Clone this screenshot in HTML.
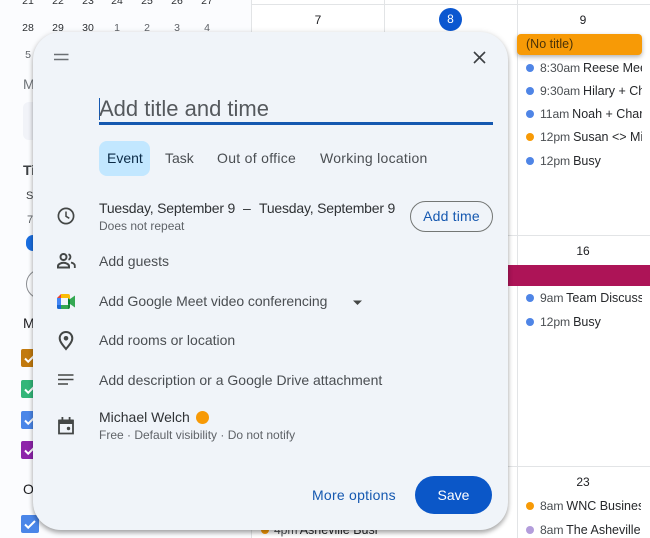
<!DOCTYPE html>
<html><head><meta charset="utf-8">
<style>
html,body{margin:0;padding:0;background:#fff}
#p{position:relative;width:650px;height:538px;overflow:hidden;background:#fff;font-family:"Liberation Sans",sans-serif;color:#3c4043;filter:blur(.3px)}
.t{position:absolute;white-space:nowrap;line-height:18px}
.g{font-size:14px;color:#4a4e52;top:0}
.s{font-size:12px;color:#5f6368}
.c{font-size:10.5px;color:#2c2f32;width:20px;text-align:center;font-weight:400}
.l{position:absolute;background:#e2e4e6}
.ev{font-size:12.5px;color:#26282b;position:absolute;white-space:nowrap;overflow:hidden;line-height:16px}
.ev i{font-style:normal;color:#4a4e52;font-size:12.2px;letter-spacing:-.1px;margin-right:-.5px}
.d{position:absolute;width:8px;height:8px;border-radius:50%;background:#4f85e6}
.cb{position:absolute;left:21px;width:18px;height:18px;border-radius:2px}
.cb svg{position:absolute;left:0;top:0}
.ic{position:absolute}
</style></head><body><div id="p">
<div style="position:absolute;left:0;top:0;width:251px;height:538px;background:#fbfcfe"></div>
<div class="l" style="left:251px;top:0;width:1px;height:538px"></div>
<div class="l" style="left:517px;top:0;width:1px;height:538px"></div>
<div class="l" style="left:384px;top:0;width:1px;height:34px"></div>
<div class="l" style="left:251px;top:4px;width:399px;height:1px"></div>
<div class="l" style="left:508px;top:235px;width:142px;height:1px"></div>
<div class="l" style="left:508px;top:466px;width:142px;height:1px"></div>

<div class="t c" style="left:18px;top:-8px">21</div><div class="t c" style="left:48px;top:-8px">22</div><div class="t c" style="left:78px;top:-8px">23</div><div class="t c" style="left:107px;top:-8px">24</div><div class="t c" style="left:137px;top:-8px">25</div><div class="t c" style="left:167px;top:-8px">26</div><div class="t c" style="left:197px;top:-8px">27</div>
<div class="t c" style="left:18px;top:19px">28</div><div class="t c" style="left:48px;top:19px">29</div><div class="t c" style="left:78px;top:19px">30</div><div class="t c" style="left:107px;top:19px;color:#5f6368">1</div><div class="t c" style="left:137px;top:19px;color:#5f6368">2</div><div class="t c" style="left:167px;top:19px;color:#5f6368">3</div><div class="t c" style="left:197px;top:19px;color:#5f6368">4</div>
<div class="t c" style="left:18px;top:46px;color:#5f6368">5</div>
<div class="t" style="left:23px;top:75px;font-size:14px;color:#70757a">M</div>
<div style="position:absolute;left:23px;top:102px;width:20px;height:38px;background:#f1f3f8;border-radius:6px"></div>
<div class="t" style="left:23px;top:161px;font-size:14px;font-weight:bold;color:#3c4043">Ti</div>
<div class="t" style="left:26px;top:187px;font-size:11px;color:#3c4043">S</div>
<div class="t" style="left:27px;top:211px;font-size:11px;color:#5f6368">7.</div>
<div style="position:absolute;left:26px;top:235px;width:14px;height:16px;border-radius:8px;background:#1a6ee0"></div>
<div style="position:absolute;left:26px;top:269px;width:30px;height:30px;border-radius:50%;border:1px solid #8a8d91;box-sizing:border-box"></div>
<div class="t" style="left:23px;top:314px;font-size:14px;color:#202124">M</div>
<div class="cb" style="top:349px;background:#c27a0e"><svg width="18" height="18"><path d="M4 9.500l3.200 3.200L14 6" fill="none" stroke="#fff" stroke-width="2"/></svg></div>
<div class="cb" style="top:380px;background:#33b679"><svg width="18" height="18"><path d="M4 9.500l3.200 3.200L14 6" fill="none" stroke="#fff" stroke-width="2"/></svg></div>
<div class="cb" style="top:411px;background:#4a86e8"><svg width="18" height="18"><path d="M4 9.500l3.200 3.200L14 6" fill="none" stroke="#fff" stroke-width="2"/></svg></div>
<div class="cb" style="top:441px;background:#8e24aa"><svg width="18" height="18"><path d="M4 9.500l3.200 3.200L14 6" fill="none" stroke="#fff" stroke-width="2"/></svg></div>
<div class="t" style="left:23px;top:480px;font-size:14px;color:#202124">O</div>
<div class="cb" style="top:515px;background:#4a86e8"><svg width="18" height="18"><path d="M4 9.500l3.200 3.200L14 6" fill="none" stroke="#fff" stroke-width="2"/></svg></div>

<div class="t" style="left:308px;top:11px;width:20px;text-align:center;font-size:12px;color:#202124">7</div>
<div style="position:absolute;left:439px;top:8px;width:23px;height:23px;border-radius:50%;background:#0b57d0;color:#fff;font-size:12px;text-align:center;line-height:23px">8</div>
<div class="t" style="left:573px;top:11px;width:20px;text-align:center;font-size:12px;color:#202124">9</div>
<div class="t" style="left:573px;top:242px;width:20px;text-align:center;font-size:12px;color:#202124">16</div>
<div class="t" style="left:573px;top:473px;width:20px;text-align:center;font-size:12px;color:#202124">23</div>

<div style="position:absolute;left:517px;top:34px;width:125px;height:21px;background:#f79a06;border-radius:4px;box-shadow:0 2px 5px rgba(0,0,0,.3);font-size:12.5px;line-height:21px;color:#4a3208;text-indent:9px">(No title)</div>
<div class="d" style="left:526px;top:64px"></div><div class="ev" style="left:540px;top:60px;width:102px"><i>8:30am</i> Reese Meet</div>
<div class="d" style="left:526px;top:87px"></div><div class="ev" style="left:540px;top:83px;width:102px"><i>9:30am</i> Hilary + Chris</div>
<div class="d" style="left:526px;top:110px"></div><div class="ev" style="left:540px;top:106px;width:102px"><i>11am</i> Noah + Charlie</div>
<div class="d" style="left:526px;top:133px;background:#f79a06"></div><div class="ev" style="left:540px;top:129px;width:102px"><i>12pm</i> Susan &lt;&gt; Michael</div>
<div class="d" style="left:526px;top:157px"></div><div class="ev" style="left:540px;top:153px;width:102px"><i>12pm</i> Busy</div>

<div style="position:absolute;left:508px;top:265px;width:142px;height:21px;background:#ad1457"></div>
<div class="d" style="left:526px;top:294px"></div><div class="ev" style="left:540px;top:290px;width:102px"><i>9am</i> Team Discussion</div>
<div class="d" style="left:526px;top:318px"></div><div class="ev" style="left:540px;top:314px;width:102px"><i>12pm</i> Busy</div>
<div class="d" style="left:526px;top:502px;background:#f79a06"></div><div class="ev" style="left:540px;top:498px;width:101px"><i>8am</i> WNC Business</div>
<div class="d" style="left:526px;top:526px;background:#b39ddb"></div><div class="ev" style="left:540px;top:522px;width:102px"><i>8am</i> The Asheville</div>
<div class="d" style="left:261px;top:526px;background:#f79a06"></div><div class="ev" style="left:274px;top:522px;width:110px"><i>4pm</i> Asheville Busi</div>

<div style="position:absolute;left:33px;top:32px;width:475px;height:498px;background:#f0f4f9;border-radius:28px;box-shadow:0 3px 5px rgba(0,0,0,.3),0 0 6px rgba(0,0,0,.1)"></div>

<svg class="ic" style="left:54px;top:52px" width="15" height="10"><path d="M0 2.500h14.500M0 7.500h14.500" stroke="#6b6f73" stroke-width="1.400" fill="none"/></svg>
<svg class="ic" style="left:472px;top:50px" width="15" height="15"><path d="M2 2l11 11M13 2L2 13" stroke="#3c4043" stroke-width="1.600" fill="none"/></svg>

<div style="position:absolute;left:99px;top:98px;width:1px;height:22px;background:#1558b0"></div>
<div class="t" style="left:99px;top:96px;font-size:22px;line-height:26px;color:#55595d">Add title and time</div>
<div style="position:absolute;left:99px;top:122px;width:394px;height:3px;background:#1558b0"></div>

<div style="position:absolute;left:99px;top:141px;width:51px;height:35px;background:#c2e7ff;border-radius:8px"></div>
<div class="t" style="left:107px;top:149px;font-size:14px;color:#0a2a46">Event</div>
<div class="t g" style="left:165px;top:149px">Task</div>
<div class="t g" style="left:217px;top:149px;letter-spacing:.3px">Out of office</div>
<div class="t g" style="left:320px;top:149px;letter-spacing:.27px">Working location</div>

<svg class="ic" style="left:56px;top:206px" width="20" height="20" viewBox="0 0 20 20"><circle cx="10" cy="10" r="7.600" fill="none" stroke="#444746" stroke-width="1.700"/><path d="M10 5.500v4.800l3.300 2" fill="none" stroke="#444746" stroke-width="1.500"/></svg>
<div class="t" style="left:99px;top:199px;font-size:14px;letter-spacing:-.2px;color:#2f3235">Tuesday, September 9</div>
<div class="t" style="left:243px;top:199px;font-size:14px;color:#2f3235">–</div>
<div class="t" style="left:259px;top:199px;font-size:14px;letter-spacing:-.2px;color:#2f3235">Tuesday, September 9</div>
<div class="t s" style="left:99px;top:217px">Does not repeat</div>
<div style="position:absolute;left:410px;top:201px;width:83px;height:31px;box-sizing:border-box;border:1px solid #747775;border-radius:16px;text-align:center;font-size:14px;letter-spacing:.2px;line-height:29px;color:#1558b0">Add time</div>

<svg class="ic" style="left:56px;top:253px" width="20" height="16" viewBox="0 0 20 16"><circle cx="7.500" cy="4" r="3" fill="none" stroke="#444746" stroke-width="2"/><path d="M2 14.500v-1.500c0-1.800 3-3.200 5.500-3.200s5.500 1.400 5.500 3.200v1.500z" fill="none" stroke="#444746" stroke-width="2"/><path d="M12.500 1.200a3 3 0 0 1 0 5.600M15 9.500c2 .5 3.800 1.600 3.800 3.200v2.300" fill="none" stroke="#444746" stroke-width="1.800"/></svg>
<div class="t g" style="left:99px;top:252px">Add guests</div>

<svg class="ic" style="left:57px;top:294px" width="19" height="15" viewBox="0 0 19 15"><path d="M4 0h7v4H4z" fill="#fbbc04"/><path d="M4 0v4H0z" fill="#ea4335"/><path d="M0 4h4v7H0z" fill="#4285f4"/><path d="M0 11h4v4H1.500Q0 15 0 13.500z" fill="#1967d2"/><path d="M4 11h7v4H4z" fill="#34a853"/><path d="M11 4l2 1.500V10l-2 1z" fill="#00832d"/><path d="M11 0q2 0 2 2v3.500l-2-1.500z" fill="#fbbc04"/><path d="M11 11l2-1v3q0 2-2 2z" fill="#188038"/><path d="M13 5l5-3.500v12L13 10z" fill="#34a853"/></svg>
<div class="t g" style="left:99px;top:292px;letter-spacing:-.06px">Add Google Meet video conferencing</div>
<svg class="ic" style="left:353px;top:300px" width="10" height="6"><path d="M0 .500h9L4.500 5z" fill="#444746"/></svg>

<svg class="ic" style="left:58px;top:331px" width="16" height="20" viewBox="0 0 16 20"><path d="M8 1c-3.600 0-6.300 2.700-6.300 6.200 0 3.400 3 6.800 6.300 10.800 3.300-4 6.300-7.400 6.300-10.800C14.300 3.700 11.600 1 8 1z" fill="none" stroke="#444746" stroke-width="2"/><circle cx="8" cy="7.300" r="2.300" fill="#444746"/></svg>
<div class="t g" style="left:99px;top:331px">Add rooms or location</div>

<svg class="ic" style="left:58px;top:374px" width="16" height="12"><path d="M0 1h15.500M0 5.500h15.500M0 10h10" stroke="#444746" stroke-width="1.500" fill="none"/></svg>
<div class="t g" style="left:99px;top:371px">Add description or a Google Drive attachment</div>

<svg class="ic" style="left:58px;top:417px" width="16" height="18" viewBox="0 0 16 18"><path d="M1 3.500h14v13H1z" fill="none" stroke="#444746" stroke-width="1.800"/><path d="M1 2.500h14V7H1zM3.500 0h1.800v3H3.500zM10.700 0h1.800v3h-1.800z" fill="#444746"/><circle cx="10.500" cy="11.500" r="1.700" fill="#444746"/></svg>
<div class="t" style="left:99px;top:408px;font-size:14px;color:#2f3235">Michael Welch</div>
<div style="position:absolute;left:196px;top:411px;width:13px;height:13px;border-radius:50%;background:#f79a06"></div>
<div class="t s" style="left:99px;top:426px">Free · Default visibility · Do not notify</div>

<div class="t" style="left:312px;top:486px;font-size:14px;letter-spacing:.25px;color:#1558b0">More options</div>
<div style="position:absolute;left:415px;top:476px;width:77px;height:38px;border-radius:19px;background:#0b57c8;color:#fff;font-size:14px;text-align:center;line-height:38px">Save</div>
</div></body></html>
